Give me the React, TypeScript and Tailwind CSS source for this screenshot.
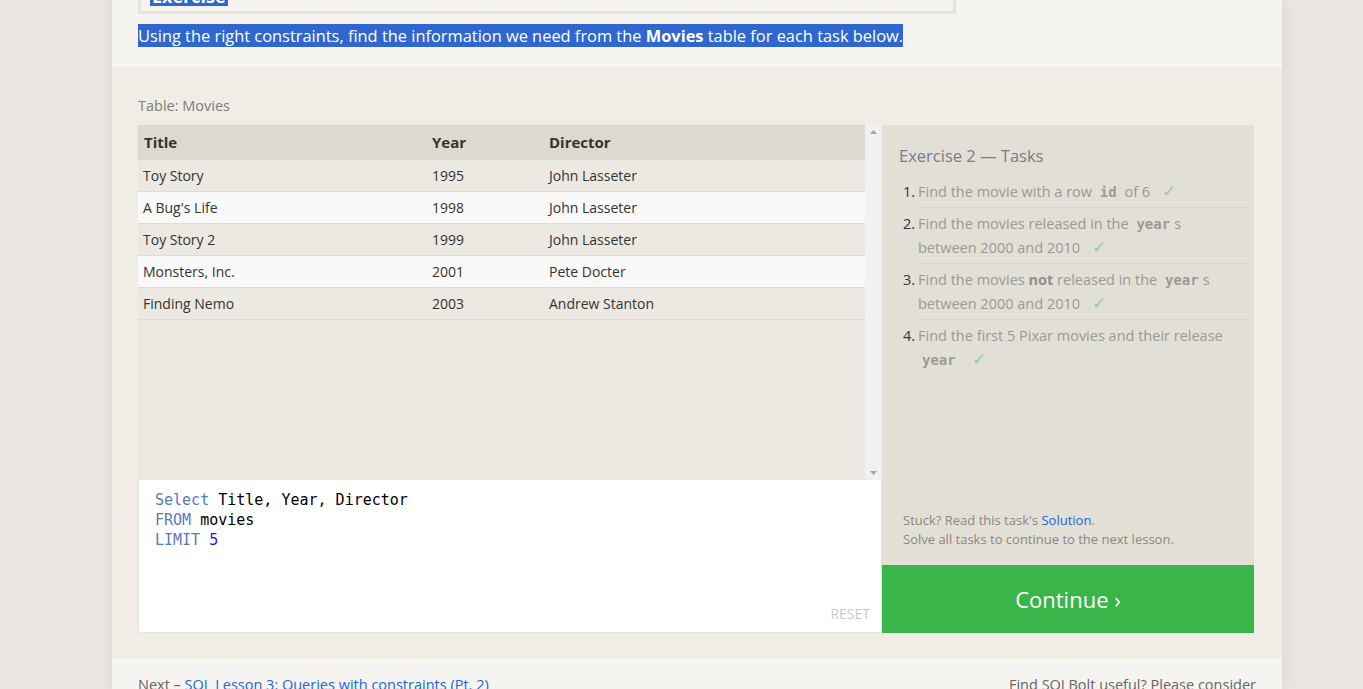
const rows = [
  ['Toy Story', '1995', 'John Lasseter'],
  ["A Bug's Life", '1998', 'John Lasseter'],
  ['Toy Story 2', '1999', 'John Lasseter'],
  ['Monsters, Inc.', '2001', 'Pete Docter'],
  ['Finding Nemo', '2003', 'Andrew Stanton'],
]

const mono = "font-['DejaVu_Sans_Mono','Liberation_Mono',monospace]"

function Check() {
  return <span className="ml-3 text-[17px] leading-none text-[#8fd19e]">✓</span>
}

function Code({children}:{children:string}) {
  return <code className={`${mono} font-bold text-[14px] leading-none text-[#9a9a96] px-1`}>{children}</code>
}

function Task({n, last, children}:{n:number, last?:boolean, children:React.ReactNode}) {
  return (
    <li className="flex">
      <span className="w-[19px] text-[#333] text-right pr-[3px] py-[3.5px]">{n}.</span>
      <div className={`flex-1 py-[3.5px] pr-[10px] ${last ? '' : 'border-b border-[#d6d4ca]'}`}>{children}</div>
    </li>
  )
}

export default function App() {
  return (
    <div className="min-h-screen bg-[#e9e6e2] font-['Open_Sans','Noto_Sans',sans-serif]">
      <div className="ml-[112px] w-[1170px] h-[689px] overflow-hidden bg-[#f5f4f0] shadow-[0_0_14px_rgba(0,0,0,0.08)]">
        {/* intro */}
        <div className="px-[26px] h-[67px]">
          <div className="w-[818px] h-[14px] border-x-[3px] border-b-[3px] border-[#e6e4dc] relative">
            <span className="absolute left-[9px] top-[-14px] bg-[#2f66d0] text-white font-bold text-[18px] leading-[20px] px-0.5">Exercise</span>
          </div>
          <p className="mt-[10px] text-[16.4px] leading-[24px] text-white">
            <span className="bg-[#2f66d0]">Using the right constraints, find the information we need from the <b>Movies</b> table for each task below.</span>
          </p>
        </div>

        {/* exercise */}
        <div className="bg-[#efede6] px-[26px] pt-[28px] pb-[26px]">
          <div className="text-[14.5px] text-[#7d7d7a] h-[30px]">Table: Movies</div>
          <div className="flex">
            <div className="w-[744px] flex flex-col">
              <div className="flex h-[355px] bg-[#ebe9e1]">
                <div className="flex-1">
                  <div className="flex h-[35px] items-center bg-[#dcdacf] text-[15px] font-bold text-[#333]">
                    <div className="w-[294px] pl-[6px]">Title</div>
                    <div className="w-[117px]">Year</div>
                    <div>Director</div>
                  </div>
                  {rows.map((r, i) => (
                    <div key={r[0]} className={`flex h-[32px] items-center text-[14px] text-[#333] border-b border-[#deddd8] ${i % 2 ? 'bg-[#f9f9f9]' : 'bg-[#ebe9e1]'}`}>
                      <div className="w-[294px] pl-[5px]">{r[0]}</div>
                      <div className="w-[117px]">{r[1]}</div>
                      <div>{r[2]}</div>
                    </div>
                  ))}
                </div>
                <div className="w-[17px] bg-[#f1f1f1] flex flex-col justify-between items-center py-[5px]">
                  <svg width="7" height="4" viewBox="0 0 7 4"><path d="M3.5 0L7 4H0z" fill="#a3a3a3" /></svg>
                  <svg width="7" height="4" viewBox="0 0 7 4"><path d="M0 0h7L3.5 4z" fill="#a3a3a3" /></svg>
                </div>
              </div>
              <div className="h-[153px] bg-white border border-[#e6e4dc] border-t-0 relative px-[16px] pt-[10px]">
                <pre className={`${mono} text-[15px] leading-[20px] text-black`}>
                  <span className="text-[#5b78c0]">Select</span> Title, Year, Director{'\n'}
                  <span className="text-[#5b78c0]">FROM</span> movies{'\n'}
                  <span className="text-[#5b78c0]">LIMIT</span> <span className="text-[#1a1aee]">5</span>
                </pre>
                <span className="absolute right-[11px] bottom-[8px] text-[14px] text-[#c9c9c9]">RESET</span>
              </div>
            </div>
            <div className="w-[372px] flex flex-col">
              <div className="h-[440px] bg-[#e2e0d6] pl-[17px] pr-[6px] pt-[19px] flex flex-col">
                <div className="text-[16.5px] leading-[24px] text-[#79798a] mb-[8px]">Exercise 2 — Tasks</div>
                <ol className="text-[14.5px] leading-[24px] text-[#999995]">
                  <Task n={1}>Find the movie with a row <Code>id</Code> of 6<Check /></Task>
                  <Task n={2}>Find the movies released in the <Code>year</Code>s between 2000 and 2010<Check /></Task>
                  <Task n={3}>Find the movies <b className="text-[#8f8f8b]">not</b> released in the <Code>year</Code>s between 2000 and 2010<Check /></Task>
                  <Task n={4} last>Find the first 5 Pixar movies and their release <Code>year</Code><Check /></Task>
                </ol>
                <div className="mt-auto mb-[16px] pl-[4px] text-[13px] leading-[19px] text-[#8a8780]">
                  Stuck? Read this task's <span className="text-[#2266dd]">Solution</span>.<br />
                  Solve all tasks to continue to the next lesson.
                </div>
              </div>
              <div className="h-[68px] bg-[#3ab54a] flex items-center justify-center text-white text-[22px]">Continue ›</div>
            </div>
          </div>
        </div>

        {/* footer */}
        <div className="px-[26px] pt-[15px] flex justify-between text-[14.5px]">
          <div className="text-[#666]">Next – <span className="text-[#2266dd]">SQL Lesson 3: Queries with constraints (Pt. 2)</span></div>
          <div className="text-[#666]">Find SQLBolt useful? Please consider</div>
        </div>
      </div>
    </div>
  )
}
